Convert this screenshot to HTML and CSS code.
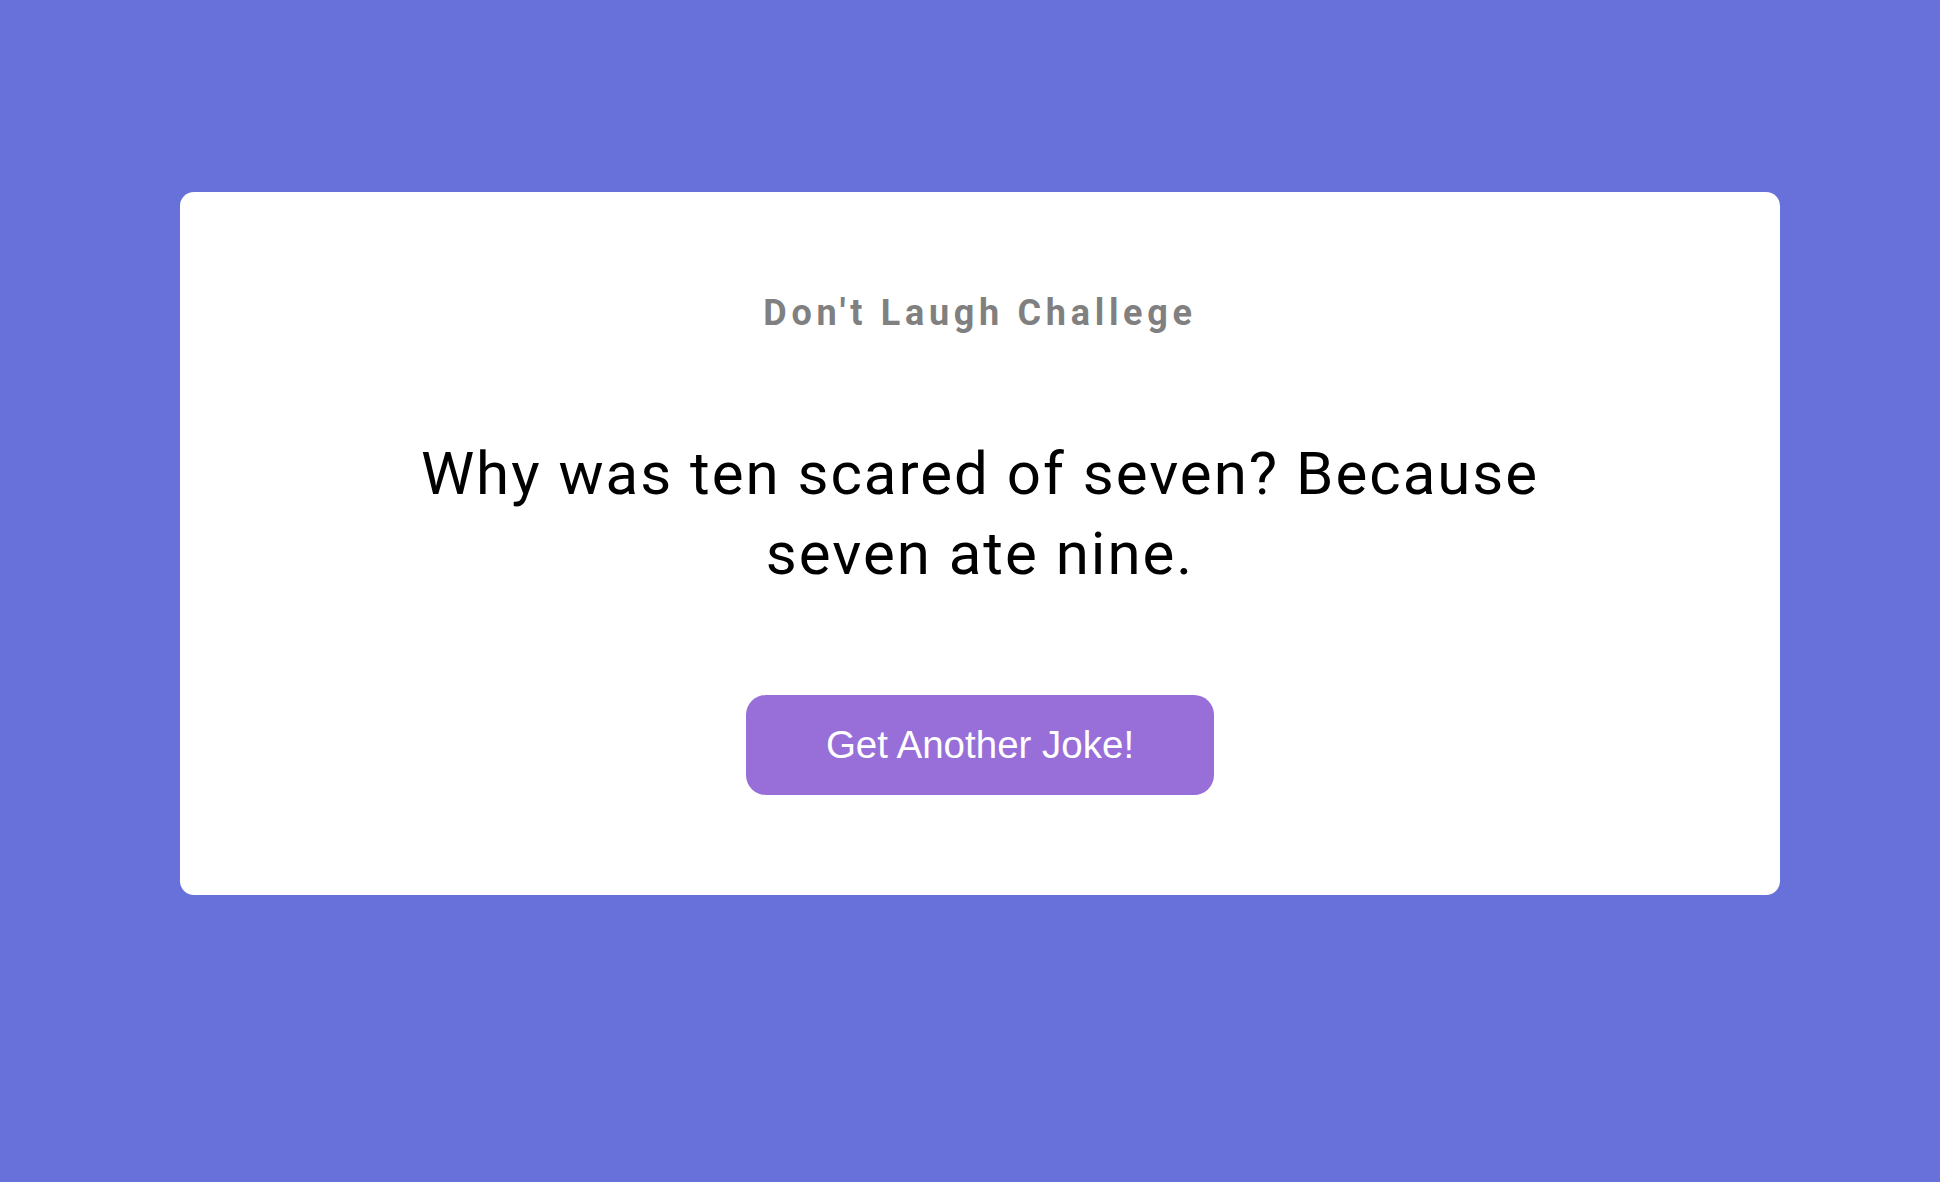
FILE: index.html
```html
<!DOCTYPE html>
<html lang="en">
<head>
<meta charset="utf-8">
<title>Don't Laugh Challege</title>
<link rel="stylesheet" href="styles.css">
</head>
<body>
<main class="page">
  <section class="card">
    <h3 class="title">Don't Laugh Challege</h3>
    <p class="joke">Why was ten scared of seven? Because seven ate nine.</p>
    <button class="btn" type="button">Get Another Joke!</button>
  </section>
</main>
</body>
</html>
```
FILE: styles.css
```css
html, body {
  margin: 0;
  padding: 0;
}
body {
  background: #6771d9;
  min-height: 1182px;
  font-family: Roboto, "Liberation Sans", sans-serif;
}
.page {
  padding: 192px 160px 0 180px;
}
.card {
  width: 1600px;
  box-sizing: border-box;
  background: #ffffff;
  border-radius: 14px;
  padding: 100px 0 100px;
  display: flex;
  flex-direction: column;
  align-items: center;
  text-align: center;
}
.title {
  margin: 0;
  font-family: Roboto, sans-serif;
  font-weight: 700;
  font-size: 36px;
  line-height: 42px;
  letter-spacing: 4.7px;
  color: #808080;
}
.joke {
  margin: 100px 0 0;
  max-width: 1200px;
  font-family: Roboto, sans-serif;
  font-weight: 400;
  font-size: 60px;
  line-height: 80px;
  letter-spacing: 2px;
  color: #000000;
}
.btn {
  margin-top: 101px;
  width: 468px;
  height: 100px;
  border: none;
  border-radius: 20px;
  background: #986fd8;
  color: #ffffff;
  font-family: "Liberation Sans", Arial, sans-serif;
  font-size: 38.5px;
  padding: 0;
  cursor: pointer;
}
```
